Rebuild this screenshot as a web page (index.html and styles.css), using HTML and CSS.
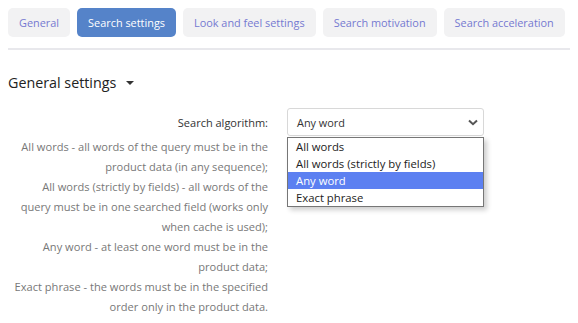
FILE: index.html
```html
<!DOCTYPE html>
<html lang="en">
<head>
    <meta charset="UTF-8">
    <title>Search settings</title>
    <link rel="stylesheet" href="styles.css">
</head>
<body>

    <!-- Tabs -->
    <div class="tabs">
        <span class="tab">General</span>
        <span class="tab active">Search settings</span>
        <span class="tab">Look and feel settings</span>
        <span class="tab">Search motivation</span>
        <span class="tab">Search acceleration</span>
    </div>

    <!-- Section -->
    <h2 class="section-title">General settings <span class="caret"></span></h2>

    <div class="setting-row">
        <div class="setting-label">
            <label>Search algorithm:</label>
            <p class="hint">All words - all words of the query must be in the product data (in any sequence);<br>
            All words (strictly by fields) - all words of the query must be in one searched field (works only when cache is used);<br>
            Any word - at least one word must be in the product data;<br>
            Exact phrase - the words must be in the specified order only in the product data.</p>
        </div>
        <div class="setting-field">
            <div class="select">
                <span>Any word</span>
                <svg class="chevron" width="10" height="7" viewBox="0 0 10 7">
                    <path d="M1 1.5 L5 5.2 L9 1.5" fill="none" stroke="#555" stroke-width="2"/>
                </svg>
            </div>
            <ul class="options">
                <li>All words</li>
                <li>All words (strictly by fields)</li>
                <li class="selected">Any word</li>
                <li>Exact phrase</li>
            </ul>
        </div>
    </div>

</body>
</html>
```

FILE: styles.css
```css
/* General Styles */
* {
    margin: 0;
    padding: 0;
    box-sizing: border-box;
    font-family: "Open Sans", "Noto Sans", sans-serif;
}

body {
    padding: 8px;
    background-color: #fff;
    color: #333;
}

/* Tabs */
.tabs {
    display: flex;
    gap: 7px;
    padding-bottom: 11px;
    border-bottom: 2px solid #e8e8ec;
}

.tab {
    height: 29px;
    line-height: 29px;
    padding: 0 11px;
    font-size: 10.9px;
    color: #7579d1;
    background-color: #f2f2f3;
    border-radius: 5px;
    white-space: nowrap;
}

.tab.active {
    background-color: #5583c9;
    color: #fff;
}

/* Section */
.section-title {
    margin-top: 21px;
    height: 22px;
    font-size: 14.3px;
    font-weight: normal;
    color: #222;
    display: flex;
    align-items: center;
    gap: 10px;
}

.caret {
    width: 0;
    height: 0;
    margin-top: 1px;
    border-left: 4px solid transparent;
    border-right: 4px solid transparent;
    border-top: 4px solid #333;
}

.setting-row {
    display: flex;
    gap: 19px;
    margin-top: 15px;
}

.setting-label {
    width: 260px;
    text-align: right;
}

.setting-label label {
    display: block;
    font-size: 11px;
    line-height: 20px;
    padding-top: 5px;
    color: #333;
}

.hint {
    margin-top: 4px;
    margin-left: 3px;
    font-size: 11.1px;
    line-height: 20px;
    color: #787878;
}

.setting-field {
    position: relative;
    width: 197px;
}

.select {
    height: 28px;
    border: 1px solid #d8d8d8;
    border-radius: 3px;
    display: flex;
    align-items: center;
    justify-content: space-between;
    padding: 0 5px 0 9px;
    font-size: 10.9px;
    color: #333;
}

/* Open dropdown list */
.options {
    position: absolute;
    top: 29px;
    left: 0;
    width: 197px;
    list-style: none;
    background: #fff;
    border: 1px solid #767676;
    box-shadow: 3px 3px 5px rgba(0, 0, 0, 0.2);
}

.options li {
    height: 17px;
    line-height: 17px;
    padding: 0 8px;
    font-size: 11.3px;
    color: #222;
}

.options li.selected {
    background-color: #5c80f1;
    color: #fff;
}
```
